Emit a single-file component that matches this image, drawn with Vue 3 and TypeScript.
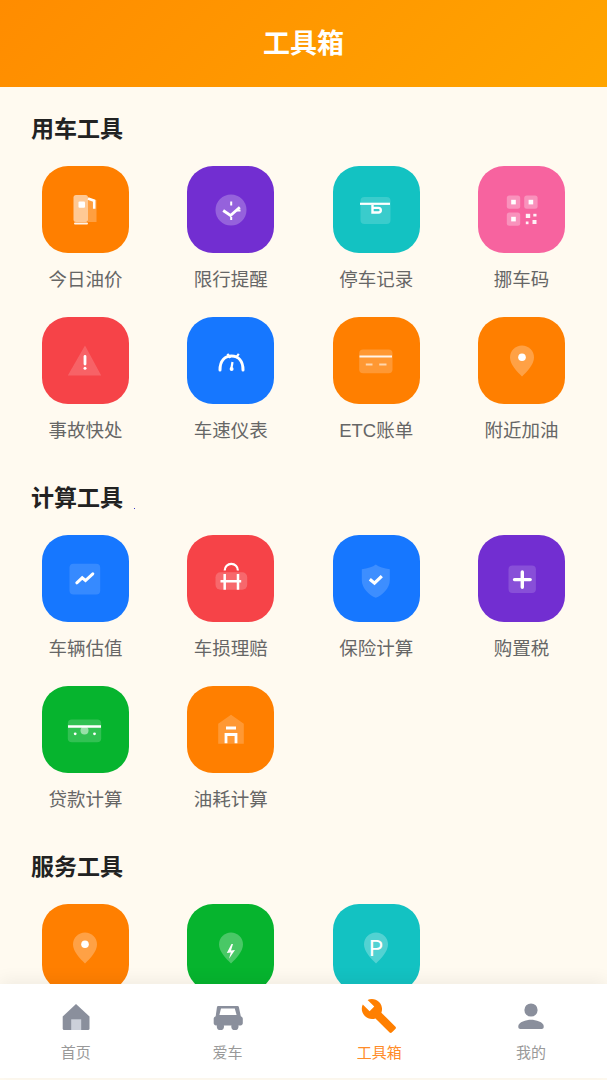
<script setup lang="ts">
interface Tool {
  name?: string
  icon: string
  color: 'orange' | 'purple' | 'teal' | 'pink' | 'red' | 'blue' | 'green'
}

interface Section {
  title: string
  tools: Tool[]
  speck?: boolean
}

const sections: Section[] = [
  {
    title: '用车工具',
    tools: [
      { name: '今日油价', icon: 'i-fuel', color: 'orange' },
      { name: '限行提醒', icon: 'i-clock', color: 'purple' },
      { name: '停车记录', icon: 'i-record', color: 'teal' },
      { name: '挪车码', icon: 'i-qr', color: 'pink' },
      { name: '事故快处', icon: 'i-warn', color: 'red' },
      { name: '车速仪表', icon: 'i-gauge', color: 'blue' },
      { name: 'ETC账单', icon: 'i-card', color: 'orange' },
      { name: '附近加油', icon: 'i-pin', color: 'orange' },
    ],
  },
  {
    title: '计算工具',
    speck: true,
    tools: [
      { name: '车辆估值', icon: 'i-chart', color: 'blue' },
      { name: '车损理赔', icon: 'i-bag', color: 'red' },
      { name: '保险计算', icon: 'i-shield', color: 'blue' },
      { name: '购置税', icon: 'i-plus', color: 'purple' },
      { name: '贷款计算', icon: 'i-money', color: 'green' },
      { name: '油耗计算', icon: 'i-house', color: 'orange' },
    ],
  },
  {
    // the labels of this row sit below the tab bar, out of view
    title: '服务工具',
    tools: [
      { icon: 'i-pin', color: 'orange' },
      { icon: 'i-charge', color: 'green' },
      { icon: 'i-park', color: 'teal' },
    ],
  },
]

const tabs = [
  { name: '首页', icon: 'n-home', active: false },
  { name: '爱车', icon: 'n-car', active: false },
  { name: '工具箱', icon: 'n-tool', active: true },
  { name: '我的', icon: 'n-user', active: false },
]
</script>

<template>
  <div class="page">
    <svg class="sprite" aria-hidden="true">
      <defs>
        <g id="pin-shape">
          <path d="M25 9.5a12 12 0 0 1 12 12c0 7-7 14-12 19-5-5-12-12-12-19a12 12 0 0 1 12-12z" fill="#fff" fill-opacity=".27" />
        </g>
        <g id="i-fuel">
          <rect x="13.500" y="10" width="14.500" height="27" rx="2.500" fill="#fff" fill-opacity=".58" />
          <path d="M28 15h8.500v22H28z" fill="#fff" fill-opacity=".25" />
          <rect x="18.500" y="16.500" width="6.500" height="6.200" rx="1" fill="#fff" />
          <rect x="14" y="37.400" width="14" height="2.200" rx="1" fill="#fff" fill-opacity=".9" />
          <path d="M28 13.500l6.200 2.200v8" fill="none" stroke="#fff" stroke-width="2.500" />
        </g>
        <g id="i-clock">
          <circle cx="25" cy="25" r="15.500" fill="#fff" fill-opacity=".25" />
          <path d="M17.200 25.500l7.300 5 9.300-8.300" fill="none" stroke="#fff" stroke-width="2.800" />
          <path d="M25.200 16.500v4M25.200 32v3M30.500 25.500h4" fill="none" stroke="#fff" stroke-width="2" />
        </g>
        <g id="i-record">
          <rect x="9.500" y="12" width="30" height="27" rx="4" fill="#fff" fill-opacity=".17" />
          <path d="M9 18.800h30" stroke="#fff" stroke-width="2.200" />
          <path d="M21.500 20v7.500h6a2.300 2.300 0 0 0 0-4.600h-6" fill="none" stroke="#fff" stroke-width="2.400" />
        </g>
        <g id="i-qr">
          <rect x="9.800" y="10.500" width="13.400" height="13.300" rx="2.500" fill="#fff" fill-opacity=".3" />
          <rect x="27.200" y="10.500" width="13.400" height="13.300" rx="2.500" fill="#fff" fill-opacity=".3" />
          <rect x="9.800" y="27.500" width="13.400" height="13.300" rx="2.500" fill="#fff" fill-opacity=".3" />
          <rect x="14.200" y="14.800" width="4.600" height="4.600" fill="#fff" />
          <rect x="31.600" y="14.800" width="4.600" height="4.600" fill="#fff" />
          <rect x="14.200" y="31.800" width="4.600" height="4.600" fill="#fff" />
          <rect x="28.800" y="28.800" width="4.400" height="4.200" fill="#fff" fill-opacity=".9" />
          <rect x="36.300" y="28.800" width="3.200" height="2.700" fill="#fff" fill-opacity=".9" />
          <rect x="28.800" y="36.500" width="2.700" height="2.700" fill="#fff" fill-opacity=".9" />
          <rect x="35.500" y="35" width="4" height="4" fill="#fff" fill-opacity=".9" />
        </g>
        <g id="i-warn">
          <path d="M25 9.500l16.200 30H7.800z" fill="#fff" fill-opacity=".17" />
          <path d="M25 20.500V28" stroke="#fff" stroke-width="2.800" stroke-linecap="round" />
          <circle cx="25" cy="32.300" r="1.500" fill="#fff" />
        </g>
        <g id="i-gauge">
          <path d="M14 34C14 24.500 19 20 25.500 20S37 24.500 37 34" fill="none" stroke="#fff" stroke-width="3" stroke-linecap="round" />
          <path d="M21.400 17.800l3 4M32.800 17.800l-3 4" stroke="#fff" stroke-width="2.200" />
          <path d="M26.500 26l-1.200 7" stroke="#fff" stroke-width="2.200" />
          <circle cx="25.600" cy="33" r="2" fill="#fff" />
        </g>
        <g id="i-card">
          <rect x="8.200" y="13.500" width="33.300" height="23.700" rx="4" fill="#fff" fill-opacity=".2" />
          <path d="M8.500 20.500h32.500" stroke="#fff" stroke-opacity=".9" stroke-width="2" />
          <path d="M14.800 28.500h6.700M28.200 28.500h7.300" stroke="#fff" stroke-opacity=".6" stroke-width="2.200" />
        </g>
        <g id="i-pin">
          <use href="#pin-shape" />
          <circle cx="25" cy="21.200" r="3.800" fill="#fff" />
        </g>
        <g id="i-chart">
          <rect x="9.500" y="9.800" width="30.700" height="30.700" rx="4" fill="#fff" fill-opacity=".14" />
          <path d="M16.800 28.800l5.400-5 3.300 2.700 7.300-6.700" fill="none" stroke="#fff" stroke-width="3" stroke-linecap="round" />
        </g>
        <g id="i-bag">
          <rect x="9.500" y="18.200" width="31.700" height="17.600" rx="5" fill="#fff" fill-opacity=".2" />
          <path d="M18.700 16.500a6.600 6.600 0 0 1 13.200 0" fill="none" stroke="#fff" stroke-width="2.200" />
          <path d="M18.700 20v15.800M32 20v15.800M14.500 27.200h20.700" fill="none" stroke="#fff" stroke-width="2.500" />
        </g>
        <g id="i-shield">
          <path d="M24.800 10.500c3 2.600 8.500 4 14 4.700v11c0 8-7.500 15-14 17.600-6.500-2.600-14-9.600-14-17.600v-11c5.500-.7 11-2.100 14-4.700z" fill="#fff" fill-opacity=".17" />
          <path d="M18.800 25.200l4.700 4 7.300-7" fill="none" stroke="#fff" stroke-width="3.200" />
        </g>
        <g id="i-plus">
          <rect x="11.500" y="11.500" width="27.400" height="27.600" rx="4" fill="#fff" fill-opacity=".16" />
          <path d="M17.500 25.600h15.700M25.300 18v15.300" fill="none" stroke="#fff" stroke-width="3.400" stroke-linecap="round" />
        </g>
        <g id="i-money">
          <rect x="7.800" y="14.500" width="33.400" height="22.700" rx="4" fill="#fff" fill-opacity=".18" />
          <circle cx="24.500" cy="25.500" r="4" fill="#fff" fill-opacity=".5" />
          <path d="M8 21.500h33" stroke="#fff" stroke-width="2.400" />
          <circle cx="15.200" cy="28.800" r="1.400" fill="#fff" />
          <circle cx="34.500" cy="28.800" r="1.400" fill="#fff" />
        </g>
        <g id="i-house">
          <path d="M25 9.800l12.800 9V38.800H12.200V18.800z" fill="#fff" fill-opacity=".2" />
          <path d="M20 38.300V29.500h10v8.800M20 23h10" fill="none" stroke="#fff" stroke-width="2.800" />
        </g>
        <g id="i-charge">
          <use href="#pin-shape" />
          <path d="M25.500 21l-4.700 9 4-.5-1.800 6.300 6-8.800-4 .4 2-6.400z" fill="#fff" />
        </g>
        <g id="i-park">
          <use href="#pin-shape" />
          <text x="25" y="32.500" class="pin-letter">P</text>
        </g>

        <g id="n-home">
          <path d="M20 7l13.500 12.600V31.500a1.500 1.500 0 0 1-1.500 1.500H8.200a1.500 1.500 0 0 1-1.500-1.500V19.600z" fill="#8a8f9c" />
          <rect x="15.200" y="22.300" width="10" height="10.700" fill="#ccd0da" />
        </g>
        <g id="n-car">
          <path d="M9 9.800c.2-.5.7-.8 1.200-.8h19.400c.5 0 1 .3 1.200.8l2 9.400c1.200.5 2 1.400 2 2.600v4.400c0 1.200-1 2.200-2.200 2.200H8c-1.300 0-2.300-1-2.300-2.200v-4.400c0-1.200.8-2.100 2-2.600z" fill="#8a8f9c" />
          <path d="M13 11.600h13.800l1.800 6.400H11.400z" fill="#fff" />
          <circle cx="12.400" cy="29.400" r="3.600" fill="#8a8f9c" />
          <circle cx="26.900" cy="29.400" r="3.600" fill="#8a8f9c" />
        </g>
        <g id="n-tool">
          <path transform="translate(1.300 .3) scale(1.55)" d="M22.700 19l-9.100-9.100c.9-2.300.4-5-1.500-6.900-2-2-5-2.400-7.400-1.300L9 6 6 9 1.600 4.700C.4 7.100.9 10.100 2.900 12.100c1.900 1.900 4.600 2.400 6.900 1.500l9.100 9.100c.4.4 1 .4 1.400 0l2.300-2.300c.5-.4.5-1.100.1-1.400z" fill="#ff7f00" />
        </g>
        <g id="n-user">
          <circle cx="20" cy="13" r="6.600" fill="#8a8f9c" />
          <path d="M7.300 30v-1c0-4 8-6.300 12.700-6.300S32.700 25 32.700 29v1c0 1.200-.8 2-2 2H9.300c-1.200 0-2-.8-2-2z" fill="#8a8f9c" />
        </g>
      </defs>
    </svg>

    <header class="top-bar">工具箱</header>

    <main class="content">
      <section v-for="section in sections" :key="section.title" class="group">
        <h2 class="group-title">
          {{ section.title }}
          <i v-if="section.speck" class="speck"></i>
        </h2>
        <div class="tool-grid">
          <div v-for="tool in section.tools" :key="tool.icon" class="tool">
            <div class="tile" :class="tool.color">
              <svg class="tile-icon" viewBox="0 0 50 50">
                <use :href="`#${tool.icon}`" />
              </svg>
            </div>
            <span v-if="tool.name" class="tool-name">{{ tool.name }}</span>
          </div>
        </div>
      </section>
    </main>

    <nav class="tab-bar">
      <div v-for="tab in tabs" :key="tab.name" class="tab" :class="{ active: tab.active }">
        <svg class="tab-icon" viewBox="0 0 40 40">
          <use :href="`#${tab.icon}`" />
        </svg>
        <span class="tab-name">{{ tab.name }}</span>
      </div>
    </nav>
  </div>
</template>

<style scoped>
.page {
  display: flex;
  flex-direction: column;
  height: 1080px;
  overflow: hidden;
  background: #fffaf0;
  font-family: 'Noto Sans CJK SC', 'Noto Sans', sans-serif;
}

.sprite {
  display: none;
}

.top-bar {
  flex: none;
  height: 87px;
  padding-bottom: 4px;
  box-sizing: border-box;
  display: flex;
  align-items: center;
  justify-content: center;
  background: linear-gradient(135deg, #ff8c00, #ffa500);
  color: #fff;
  font-size: 27px;
  font-weight: 700;
}

.content {
  flex: 1;
  min-height: 0;
  overflow: hidden;
  padding: 27px 12.75px 0;
}

.group {
  margin-bottom: 40px;
}

.group-title {
  position: relative;
  margin: 0 0 26px 18.25px;
  font-size: 23px;
  line-height: 26px;
  font-weight: 700;
  color: #222;
}

.speck {
  position: absolute;
  left: 103px;
  top: 25px;
  width: 1px;
  height: 1px;
  background: #3a3ac8;
}

.tool-grid {
  display: grid;
  grid-template-columns: repeat(4, 1fr);
  row-gap: 25px;
}

.tool {
  display: flex;
  flex-direction: column;
  align-items: center;
  gap: 16px;
  height: 126px;
}

.tile {
  flex: none;
  width: 87px;
  height: 87px;
  border-radius: 26px;
  display: flex;
  align-items: center;
  justify-content: center;
}

.tile-icon {
  width: 50px;
  height: 50px;
}

.orange { background: #ff7f00; }
.purple { background: #722ed1; }
.teal { background: #13c2c2; }
.pink { background: #f7639f; }
.red { background: #f64348; }
.blue { background: #1677ff; }
.green { background: #06b42e; }

.pin-letter {
  fill: #fff;
  font-family: Roboto, sans-serif;
  font-size: 22px;
  font-weight: 400;
  text-anchor: middle;
}

.tool-name {
  font-family: 'Liberation Sans', 'Noto Sans CJK SC', sans-serif;
  font-size: 18.5px;
  line-height: 22px;
  color: #666;
  white-space: nowrap;
}

.tab-bar {
  position: relative;
  flex: none;
  height: 94px;
  margin-bottom: 2px;
  display: grid;
  grid-template-columns: repeat(4, 1fr);
  background: #fff;
  box-shadow: 0 -4px 16px rgba(0, 0, 0, 0.06);
}

.tab {
  display: flex;
  flex-direction: column;
  align-items: center;
  padding-top: 13px;
  gap: 5px;
}

.tab-icon {
  width: 40px;
  height: 40px;
}

.tab-name {
  font-size: 15px;
  line-height: 20px;
  color: #999;
}

.tab.active .tab-name {
  color: #ff8c28;
}
</style>

<style>
html,
body {
  margin: 0;
}
</style>
